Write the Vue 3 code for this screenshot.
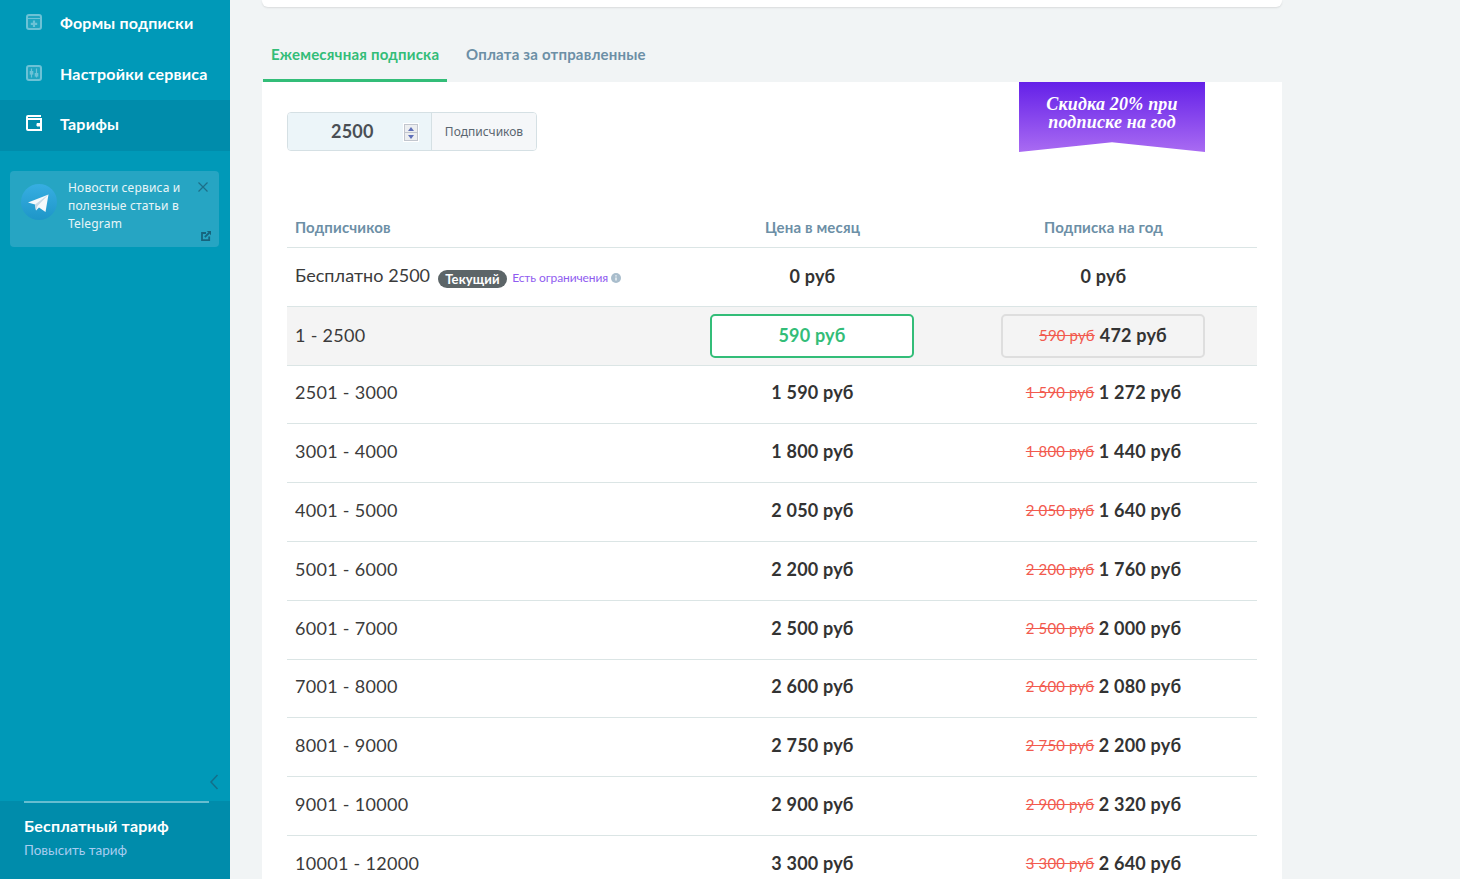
<script setup>
const rows = [
  { range: '2501 - 3000', month: '1 590 руб', old: '1 590 руб', year: '1 272 руб' },
  { range: '3001 - 4000', month: '1 800 руб', old: '1 800 руб', year: '1 440 руб' },
  { range: '4001 - 5000', month: '2 050 руб', old: '2 050 руб', year: '1 640 руб' },
  { range: '5001 - 6000', month: '2 200 руб', old: '2 200 руб', year: '1 760 руб' },
  { range: '6001 - 7000', month: '2 500 руб', old: '2 500 руб', year: '2 000 руб' },
  { range: '7001 - 8000', month: '2 600 руб', old: '2 600 руб', year: '2 080 руб' },
  { range: '8001 - 9000', month: '2 750 руб', old: '2 750 руб', year: '2 200 руб' },
  { range: '9001 - 10000', month: '2 900 руб', old: '2 900 руб', year: '2 320 руб' },
  { range: '10001 - 12000', month: '3 300 руб', old: '3 300 руб', year: '2 640 руб' },
]
</script>

<template>
  <div class="page">
    <aside class="sidebar">
      <nav class="menu">
        <a class="item">
          <svg class="icon dim" viewBox="0 0 18 18" fill="none" stroke="currentColor" stroke-width="2">
            <rect x="2" y="2" width="14" height="14" rx="2" fill="rgba(255,255,255,.12)" />
            <path d="M2 5.500h14" stroke-width="1" />
            <path d="M9 7.500v6.500M5.800 10.800h6.400" stroke-width="2.200" />
          </svg>
          Формы подписки
        </a>
        <a class="item">
          <svg class="icon dim" viewBox="0 0 18 18" fill="none" stroke="currentColor" stroke-width="2">
            <rect x="2" y="2" width="14" height="14" rx="2" fill="rgba(255,255,255,.12)" />
            <path d="M6.500 4.500v9M11.500 4.500v9" stroke-width="1.200" />
            <rect x="4.700" y="7" width="3.600" height="3.600" fill="currentColor" stroke="none" />
            <rect x="9.700" y="9" width="3.600" height="3.600" fill="currentColor" stroke="none" />
          </svg>
          Настройки сервиса
        </a>
        <a class="item active">
          <svg class="icon" viewBox="0 0 18 18" fill="none" stroke="currentColor" stroke-width="2">
            <path d="M16 2H3a1 1 0 0 0-1 1v12a1 1 0 0 0 1 1h13V5H2" />
            <path d="M12 9.500h4v2.500h-4z" fill="currentColor" stroke-width="1" />
          </svg>
          Тарифы
        </a>
      </nav>

      <div class="promo">
        <svg class="tg" viewBox="0 0 36 36">
          <defs>
            <linearGradient id="tgGrad" x1="0" y1="0" x2="0" y2="1">
              <stop offset="0" stop-color="#37aee2" />
              <stop offset="1" stop-color="#1e96c8" />
            </linearGradient>
          </defs>
          <circle cx="18" cy="18" r="18" fill="url(#tgGrad)" />
          <path d="M7 18.500 27.500 10.500 24.500 28 18 23.500 15 26.500 14 20.500z" fill="#f4f9fc" />
          <path d="M14 20.500 15 26.500 16.500 22 27.500 10.500z" fill="#c8dae6" />
        </svg>
        <p class="promo-text">Новости сервиса и полезные статьи в Telegram</p>
        <svg class="close" viewBox="0 0 10 10" fill="none" stroke="currentColor" stroke-width="1.200">
          <path d="M.5.500l9 9M9.500.500l-9 9" />
        </svg>
        <svg class="ext" viewBox="0 0 10 10" fill="none" stroke="currentColor" stroke-width="1.800">
          <path d="M5 2H1v7.200h7.200V5.500" />
          <path d="M3.800 6.200 8 2" />
          <path d="M5.800 0h4.200v4.200z" fill="currentColor" stroke="none" />
        </svg>
      </div>

      <div class="spacer"></div>
      <div class="collapse">
        <svg width="10" height="16" viewBox="0 0 10 16" fill="none" stroke="currentColor" stroke-width="1.500">
          <path d="M8.500 1 2 8l6.500 7" />
        </svg>
      </div>
      <div class="plan">
        <div class="plan-line"></div>
        <div class="plan-name">Бесплатный тариф</div>
        <a class="plan-link">Повысить тариф</a>
      </div>
    </aside>

    <main class="content">
      <div class="top-card"></div>

      <div class="tabs">
        <a class="tab tab-active">Ежемесячная подписка</a>
        <a class="tab">Оплата за отправленные</a>
      </div>

      <section class="panel">
        <div class="ribbon">Скидка 20% при<br />подписке на год</div>

        <div class="counter">
          <div class="counter-input">
            <span class="counter-value">2500</span>
            <span class="spin">
              <span class="spin-btn"><i class="arrow-up"></i></span>
              <span class="spin-btn"><i class="arrow-down"></i></span>
            </span>
          </div>
          <div class="counter-label">Подписчиков</div>
        </div>

        <div class="table">
          <div class="row head">
            <div class="col-a">Подписчиков</div>
            <div class="col-b">Цена в месяц</div>
            <div class="col-c">Подписка на год</div>
          </div>

          <div class="row first">
            <div class="col-a range free">
              Бесплатно 2500
              <span class="badge">Текущий</span>
              <span class="limits">Есть ограничения</span>
              <svg class="info" viewBox="0 0 10 10">
                <circle cx="5" cy="5" r="5" fill="#a9bdcc" />
                <path d="M5 4.500v3M5 2.200v1.300" stroke="#fff" stroke-width="1.200" />
              </svg>
            </div>
            <div class="col-b price">0 руб</div>
            <div class="col-c price">0 руб</div>
          </div>

          <div class="row selected">
            <div class="col-a range">1 - 2500</div>
            <div class="col-b">
              <div class="pick pick-on">590 руб</div>
            </div>
            <div class="col-c">
              <div class="pick pick-off"><s class="old">590 руб</s> 472 руб</div>
            </div>
          </div>

          <div v-for="row in rows" :key="row.range" class="row">
            <div class="col-a range">{{ row.range }}</div>
            <div class="col-b price">{{ row.month }}</div>
            <div class="col-c price"><s class="old">{{ row.old }}</s> {{ row.year }}</div>
          </div>
        </div>
      </section>
    </main>
  </div>
</template>

<style>
html,
body {
  margin: 0;
  height: 100%;
  overflow: hidden;
  background: #f1f4f5;
}
</style>

<style scoped>
.page {
  display: flex;
  height: 879px;
  overflow: hidden;
  font-family: Lato, "Noto Sans", sans-serif;
  color: #333;
}
.sidebar {
  width: 230px;
  flex-shrink: 0;
  display: flex;
  flex-direction: column;
  background: #0099b8;
}
.menu {
  margin-top: -2px;
}
.item {
  display: flex;
  align-items: center;
  box-sizing: border-box;
  height: 51px;
  padding: 0 0 3px 25px;
  gap: 17px;
  font-size: 16px;
  letter-spacing: 0.2px;
  font-weight: 700;
  color: #fff;
}
.item.active {
  padding-bottom: 5px;
  background: #008cab;
}
.icon {
  width: 18px;
  height: 18px;
  flex-shrink: 0;
  margin-top: -1px;
}
.icon.dim {
  color: #6cc2d6;
}
.item.active .icon {
  color: #fff;
  margin-top: 0;
}
.promo {
  position: relative;
  display: flex;
  margin: 20px 11px 0 10px;
  height: 76px;
  box-sizing: border-box;
  padding: 8px 0 0 11px;
  border-radius: 4px;
  background: #26a5c3;
}
.tg {
  width: 36px;
  height: 36px;
  flex-shrink: 0;
  margin: 5px 11px 0 0;
}
.promo-text {
  margin: 0;
  width: 122px;
  font-family: "Noto Sans", sans-serif;
  font-size: 12px;
  letter-spacing: 0.2px;
  line-height: 18px;
  color: #e8f5f8;
}
.close {
  position: absolute;
  top: 11px;
  right: 11px;
  width: 10px;
  height: 10px;
  color: #1d6f88;
}
.ext {
  position: absolute;
  bottom: 6px;
  right: 8px;
  width: 10px;
  height: 10px;
  color: #17647d;
}
.spacer {
  flex: 1;
}
.collapse {
  display: flex;
  justify-content: flex-end;
  padding: 0 11px 11px 0;
  color: #136f8a;
}
.plan {
  height: 78px;
  padding: 0 21px 0 24px;
  background: #008cab;
}
.plan-line {
  height: 2px;
  background: #67bdd0;
}
.plan-name {
  margin-top: 13px;
  font-size: 16px;
  letter-spacing: 0.2px;
  font-weight: 700;
  color: #fff;
}
.plan-link {
  display: block;
  margin-top: 7px;
  font-size: 13.500px;
  color: #a8cdf0;
}
.content {
  width: 1020px;
  margin-left: 32px;
}
.top-card {
  height: 7px;
  background: #fff;
  border-radius: 0 0 6px 6px;
  box-shadow: 0 1px 2px rgba(0, 0, 0, 0.1);
}
.tabs {
  display: flex;
  margin-top: 29px;
  height: 46px;
}
.tab {
  padding: 9px 9px 0;
  box-sizing: border-box;
  font-size: 15px;
  letter-spacing: 0.2px;
  font-weight: 700;
  color: #6c8fa6;
}
.tab-active {
  width: 184px;
  margin: 0 10px 0 1px;
  padding-left: 8px;
  white-space: nowrap;
  color: #33bd78;
  border-bottom: 3px solid #33bd78;
}
.panel {
  position: relative;
  background: #fff;
  padding: 30px 25px 0;
}
.ribbon {
  position: absolute;
  top: 0;
  left: 757px;
  width: 186px;
  height: 70px;
  box-sizing: border-box;
  padding-top: 13px;
  font-family: "Liberation Serif", serif;
  font-style: italic;
  font-weight: 700;
  font-size: 18px;
  letter-spacing: 0.2px;
  line-height: 18px;
  text-align: center;
  white-space: nowrap;
  color: #fff;
  background: linear-gradient(#6420e8, #a96bf2);
  clip-path: polygon(0 0, 100% 0, 100% 100%, 50% 86%, 0 100%);
}
.counter {
  display: flex;
  width: 250px;
  height: 39px;
  box-sizing: border-box;
  border: 1px solid #d5e0e4;
  border-radius: 4px;
  overflow: hidden;
}
.counter-input {
  position: relative;
  width: 143px;
  display: flex;
  align-items: center;
  background: #ecf5f9;
  border-right: 1px solid #d5e0e4;
}
.counter-value {
  margin-left: 43px;
  padding-bottom: 2px;
  font-size: 18px;
  font-weight: 700;
  letter-spacing: 0.2px;
  color: #4a4f55;
}
.spin {
  position: absolute;
  left: 116px;
  top: 11px;
  box-sizing: border-box;
  width: 14px;
  height: 17px;
  display: flex;
  flex-direction: column;
  gap: 1px;
  background: #c2c6ce;
  border: 1px solid #c2c6ce;
  outline: 1px solid #fff;
}
.spin-btn {
  flex: 1;
  display: flex;
  align-items: center;
  justify-content: center;
  background: #eceef0;
}
.arrow-up {
  border: 3px solid transparent;
  border-top: 0;
  border-bottom: 4px solid #5e6fb8;
}
.arrow-down {
  border: 3px solid transparent;
  border-bottom: 0;
  border-top: 4px solid #5e6fb8;
}
.counter-label {
  flex: 1;
  display: flex;
  align-items: center;
  justify-content: center;
  font-family: "Noto Sans", sans-serif;
  font-size: 12px;
  color: #5a6670;
  background: #f5f7f9;
}
.table {
  margin-top: 59px;
}
.row {
  display: grid;
  grid-template-columns: 1fr 291px 291px;
  align-items: center;
  height: 58.800px;
  border-top: 1px solid #dbe5e5;
  box-sizing: border-box;
  padding-right: 8px;
}
.row.head {
  height: 37px;
  padding-top: 8px;
  border-top: 0;
  align-items: flex-start;
  font-size: 15px;
  letter-spacing: 0.15px;
  font-weight: 700;
  color: #6c8fa6;
}
.row.selected {
  background: #f4f4f4;
}
.col-a {
  padding-left: 8px;
}
.col-b,
.col-c {
  text-align: center;
}
.range {
  padding-bottom: 4px;
  font-size: 18px;
  letter-spacing: 0.3px;
  color: #3b3b3b;
  white-space: nowrap;
}
.range.free {
  letter-spacing: 0.05px;
}
.price {
  padding-bottom: 4px;
  font-size: 18px;
  letter-spacing: 0.2px;
  font-weight: 700;
  color: #333;
}
.first .range,
.first .price,
.selected .range {
  padding-bottom: 2px;
}
.badge {
  display: inline-block;
  margin-left: 3px;
  padding: 0 7.500px;
  height: 18px;
  line-height: 18px;
  border-radius: 9px;
  font-size: 13px;
  letter-spacing: 0.1px;
  font-weight: 700;
  color: #fff;
  background: #5c6568;
  vertical-align: -2px;
}
.limits {
  margin-left: 5px;
  font-size: 12px;
  letter-spacing: -0.1px;
  color: #8f5cf0;
}
.info {
  width: 10px;
  height: 10px;
  margin-left: 3px;
  vertical-align: -1px;
}
.pick {
  box-sizing: border-box;
  width: 204px;
  height: 44px;
  margin: 0 0 0 43px;
  display: flex;
  align-items: center;
  justify-content: center;
  gap: 5px;
  padding-bottom: 2px;
  border-radius: 5px;
  font-size: 18px;
  letter-spacing: 0.2px;
  font-weight: 700;
}
.pick-on {
  border: 2px solid #33bd78;
  color: #33bd78;
  background: #fff;
}
.pick-off {
  border: 2px solid #dedede;
  color: #333;
}
.old {
  font-size: 15px;
  letter-spacing: 0.15px;
  font-weight: 400;
  vertical-align: 1px;
  color: #f25a4e;
}
</style>
